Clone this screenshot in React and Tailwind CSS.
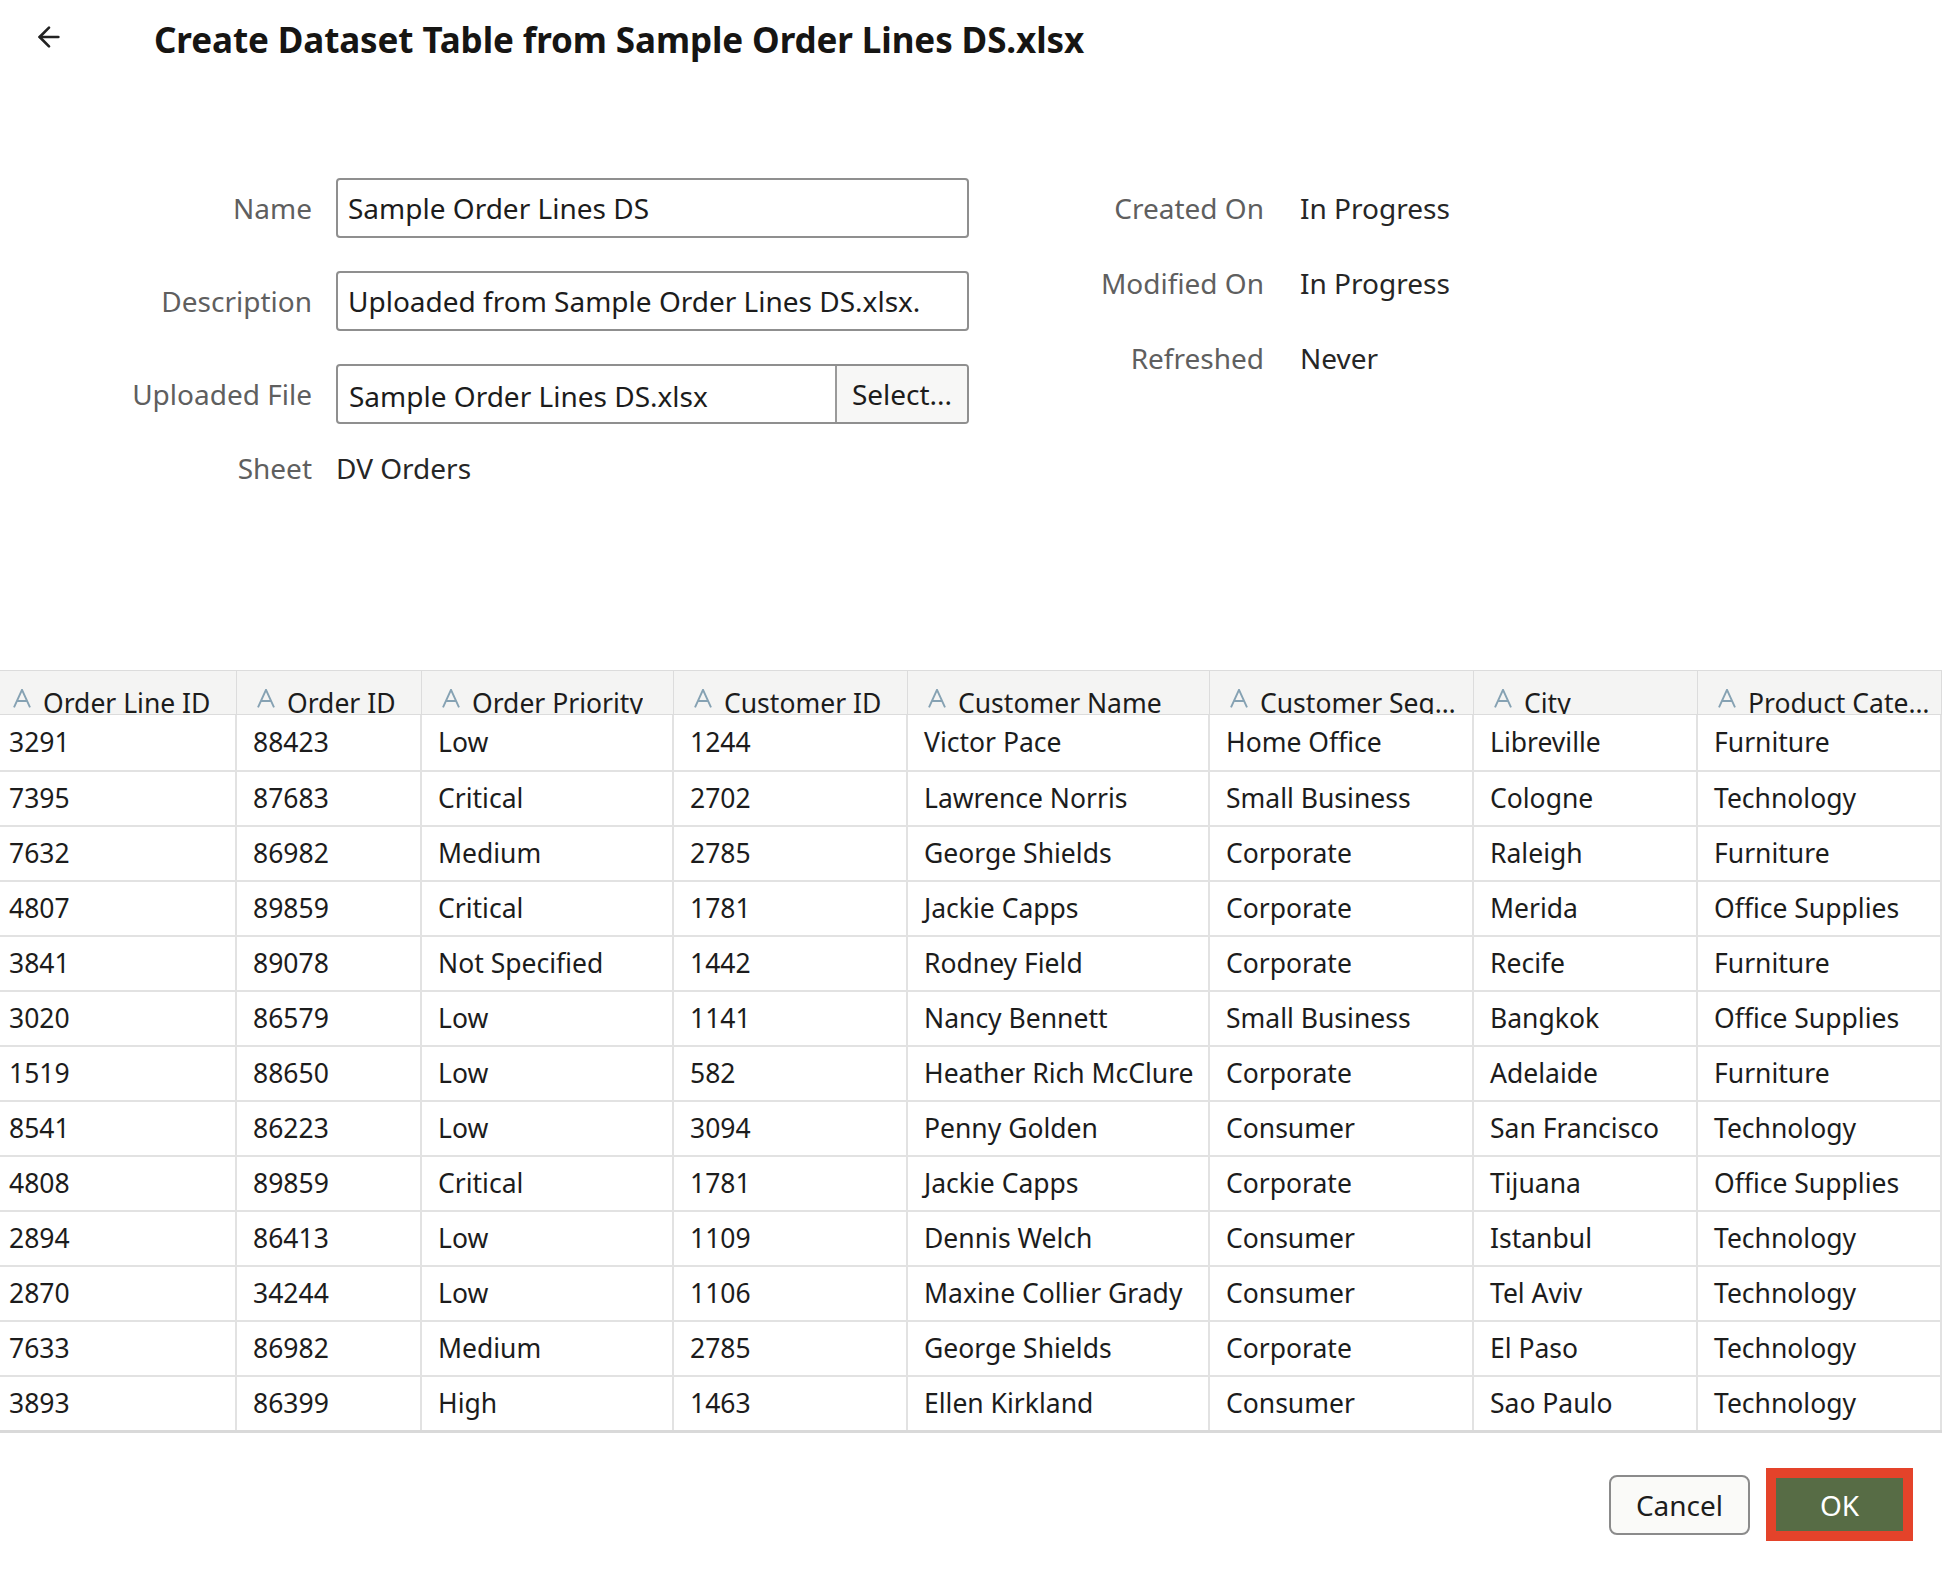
import { ArrowLeft } from "lucide-react";

const columns = [
  "Order Line ID",
  "Order ID",
  "Order Priority",
  "Customer ID",
  "Customer Name",
  "Customer Segment",
  "City",
  "Product Category",
];

const rows = [
  ["3291", "88423", "Low", "1244", "Victor Pace", "Home Office", "Libreville", "Furniture"],
  ["7395", "87683", "Critical", "2702", "Lawrence Norris", "Small Business", "Cologne", "Technology"],
  ["7632", "86982", "Medium", "2785", "George Shields", "Corporate", "Raleigh", "Furniture"],
  ["4807", "89859", "Critical", "1781", "Jackie Capps", "Corporate", "Merida", "Office Supplies"],
  ["3841", "89078", "Not Specified", "1442", "Rodney Field", "Corporate", "Recife", "Furniture"],
  ["3020", "86579", "Low", "1141", "Nancy Bennett", "Small Business", "Bangkok", "Office Supplies"],
  ["1519", "88650", "Low", "582", "Heather Rich McClure", "Corporate", "Adelaide", "Furniture"],
  ["8541", "86223", "Low", "3094", "Penny Golden", "Consumer", "San Francisco", "Technology"],
  ["4808", "89859", "Critical", "1781", "Jackie Capps", "Corporate", "Tijuana", "Office Supplies"],
  ["2894", "86413", "Low", "1109", "Dennis Welch", "Consumer", "Istanbul", "Technology"],
  ["2870", "34244", "Low", "1106", "Maxine Collier Grady", "Consumer", "Tel Aviv", "Technology"],
  ["7633", "86982", "Medium", "2785", "George Shields", "Corporate", "El Paso", "Technology"],
  ["3893", "86399", "High", "1463", "Ellen Kirkland", "Consumer", "Sao Paulo", "Technology"],
];

const gridCols =
  "grid grid-cols-[237px_185px_252px_234px_302px_264px_224px_1fr]";

// thin "A" attribute-type icon
const AttrIcon = () => (
  <svg width="18" height="19" viewBox="0 0 18 19" className="shrink-0 mb-[6px]">
    <path d="M1 18.4 L9 0.8 L17 18.4 M4.4 12 H13.6" fill="none" stroke="#86a2b3" strokeWidth="1.9" />
  </svg>
);

const Field = ({ children }) => (
  <div className="h-[60px] border-2 border-[#8f8f8f] rounded-[4px] flex items-center px-[10px] bg-white">
    {children}
  </div>
);

export default function App() {
  return (
    <div className="w-[1942px] h-[1573px] bg-white text-[#1c1c1c] font-['Noto_Sans','Open_Sans',sans-serif] overflow-hidden">
      {/* Title bar */}
      <div className="h-[80px] flex items-center">
        <ArrowLeft className="ml-[33px] mt-[-6px]" size={32} strokeWidth={2} color="#222" />
        <h1 className="ml-[89px] text-[35px] font-bold tracking-[-0.1px] text-[#161513]">
          Create Dataset Table from Sample Order Lines DS.xlsx
        </h1>
      </div>

      {/* Form */}
      <div className="mt-[98px] flex text-[28px] h-[492px]">
        <div className="grid grid-cols-[312px_633px] gap-x-[24px] gap-y-[33px] content-start">
          <div className="text-right text-[#5f5f5f] self-center">Name</div>
          <Field>Sample Order Lines DS</Field>

          <div className="text-right text-[#5f5f5f] self-center">Description</div>
          <Field>Uploaded from Sample Order Lines DS.xlsx.</Field>

          <div className="text-right text-[#5f5f5f] self-center">Uploaded File</div>
          <div className="h-[60px] border-2 border-[#8f8f8f] rounded-[4px] flex bg-white overflow-hidden">
            <div className="flex-1 flex items-center px-[11px] pt-[3px]">Sample Order Lines DS.xlsx</div>
            <div className="w-[132px] border-l-2 border-[#9a9a9a] bg-[#f7f7f6] flex items-center justify-center">
              Select...
            </div>
          </div>

          <div className="text-right text-[#5f5f5f] leading-[22px]">Sheet</div>
          <div className="leading-[22px] text-[#262626]">DV Orders</div>
        </div>

        <div className="ml-[31px] grid grid-cols-[264px_auto] gap-x-[36px] gap-y-[15px] content-start">
          {[
            ["Created On", "In Progress"],
            ["Modified On", "In Progress"],
            ["Refreshed", "Never"],
          ].map(([k, v]) => (
            <div key={k} className="contents">
              <div className="h-[60px] flex items-center justify-end text-[#5f5f5f]">{k}</div>
              <div className="h-[60px] flex items-center text-[#262626]">{v}</div>
            </div>
          ))}
        </div>
      </div>

      {/* Data table */}
      <div className="border-b-[3px] border-[#d9d9d9] text-[26.5px]">
        <div className={`${gridCols} h-[45px] bg-[#f4f4f3] border-y border-[#dcdcdc] overflow-hidden`}>
          {columns.map((c, i) => (
            <div
              key={c}
              className={`flex items-end gap-[12px] overflow-hidden border-r border-[#dcdcdc] ${i === 0 ? "pl-[13px]" : "pl-[20px]"} pr-[8px]`}
            >
              <AttrIcon />
              <span className="whitespace-nowrap truncate leading-[28px] mb-[-3px]">{c}</span>
            </div>
          ))}
        </div>
        {rows.map((r, ri) => (
          <div key={ri} className={`${gridCols} h-[55px] ${ri > 0 ? "border-t-2 border-[#e2e2e2]" : ""}`}>
            {r.map((cell, ci) => (
              <div
                key={ci}
                className={`flex items-center whitespace-nowrap overflow-hidden border-r-2 border-[#e2e2e2] ${ci === 0 ? "pl-[9px]" : "pl-[16px]"}`}
              >
                {cell}
              </div>
            ))}
          </div>
        ))}
      </div>

      {/* Footer buttons */}
      <div className="flex justify-end items-center gap-[16px] pr-[29px] mt-[35px]">
        <button className="w-[141px] h-[60px] rounded-[8px] border-2 border-[#8b8b8b] bg-[#fafaf8] text-[28px] text-[#1c1c1c]">
          Cancel
        </button>
        <div className="border-[10px] border-[#e4432a]">
          <button className="w-[127px] h-[53px] bg-[#576c45] text-white text-[28px]">OK</button>
        </div>
      </div>
    </div>
  );
}
